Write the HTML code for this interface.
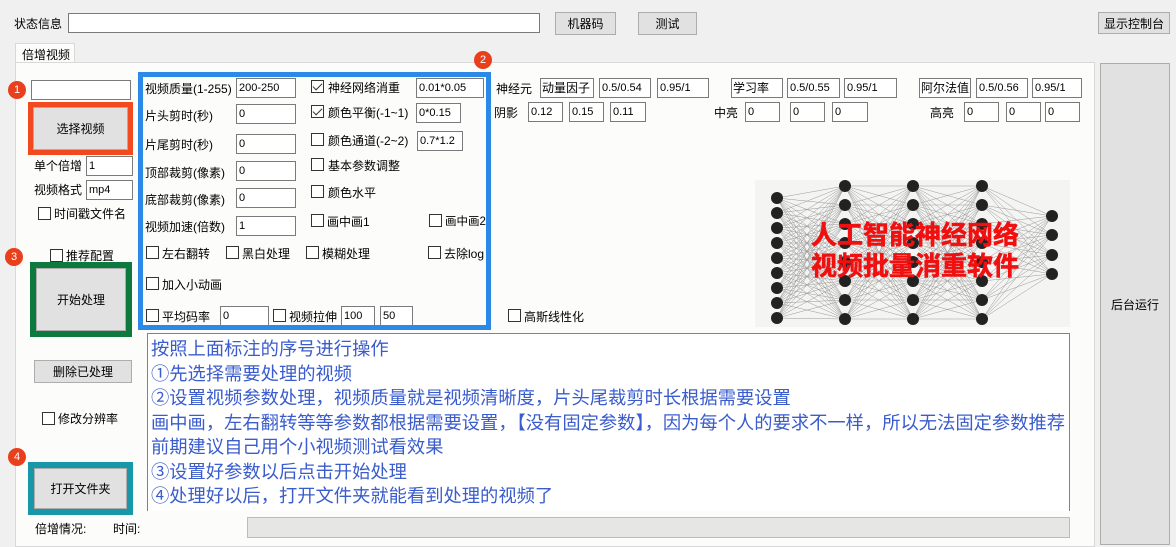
<!DOCTYPE html>
<html><head><meta charset="utf-8"><style>
*{box-sizing:border-box}
body{margin:0;width:1176px;height:547px;overflow:hidden;background:#f0f0f0;font-family:"Liberation Sans","Noto Sans CJK SC",sans-serif;font-size:12px;color:#000;position:relative}
.a{position:absolute;white-space:nowrap}
.in{position:absolute;background:#fff;border:1px solid #7a7a7a;font-family:"Liberation Sans","Noto Sans CJK SC",sans-serif;font-size:11px;padding:2px 2px;line-height:14px;height:20px;white-space:nowrap;overflow:hidden}
.btn{position:absolute;background:#e1e1e1;border:1px solid #adadad;display:flex;align-items:center;justify-content:center;font-size:12px}
.cb{position:absolute;width:13px;height:13px;border:1px solid #333;background:#fff}
.cb.on::after{content:"";position:absolute;left:3px;top:0px;width:4px;height:8px;border:solid #333;border-width:0 1.5px 1.5px 0;transform:rotate(45deg)}
.num{position:absolute;width:18px;height:18px;border-radius:50%;background:#e8401c;color:#fff;font-size:11px;display:flex;align-items:center;justify-content:center}
.lb{font-size:12px;padding:2px 1px}
</style></head><body>
<div class="a" style="left:14px;top:15px">状态信息</div>
<div class="in" style="left:68px;top:13px;width:472px"></div>
<div class="btn" style="left:555px;top:12px;width:61px;height:23px">机器码</div>
<div class="btn" style="left:638px;top:12px;width:59px;height:23px">测试</div>
<div class="btn" style="left:1098px;top:12px;width:72px;height:22px">显示控制台</div>
<div class="a" style="left:15px;top:43px;width:60px;height:20px;background:#fcfcfa;border:1px solid #d9d9d9;border-bottom:none;padding:2px 6px">倍增视频</div>
<div class="a" style="left:15px;top:62px;width:1080px;height:485px;background:#fcfcfa;border:1px solid #d9d9d9"></div>
<div class="btn" style="left:1100px;top:63px;width:70px;height:482px">后台运行</div>

<div class="in" style="left:31px;top:80px;width:100px"></div>
<div class="a" style="left:28px;top:102px;width:105px;height:53px;background:#f24a1e;padding:5px"><div class="btn" style="position:static;width:100%;height:100%">选择视频</div></div>
<div class="a" style="left:34px;top:157px">单个倍增</div><div class="in" style="left:86px;top:156px;width:47px">1</div>
<div class="a" style="left:34px;top:181px">视频格式</div><div class="in" style="left:86px;top:180px;width:47px">mp4</div>
<div class="cb" style="left:38px;top:207px"></div><div class="a" style="left:54px;top:205px">时间戳文件名</div>
<div class="cb" style="left:50px;top:249px"></div><div class="a" style="left:66px;top:247px">推荐配置</div>
<div class="a" style="left:30px;top:262px;width:102px;height:75px;background:#0c7a3e;padding:6px"><div class="btn" style="position:static;width:100%;height:100%">开始处理</div></div>
<div class="btn" style="left:34px;top:360px;width:98px;height:23px">删除已处理</div>
<div class="cb" style="left:42px;top:412px"></div><div class="a" style="left:58px;top:410px">修改分辨率</div>
<div class="a" style="left:28px;top:462px;width:105px;height:53px;background:#1797a8;padding:6px"><div class="btn" style="position:static;width:100%;height:100%">打开文件夹</div></div>
<div class="a" style="left:35px;top:520px">倍增情况:</div><div class="a" style="left:113px;top:520px">时间:</div>
<div class="a" style="left:247px;top:517px;width:823px;height:21px;background:#e6e6e6;border:1px solid #bcbcbc"></div>

<div class="num" style="left:8px;top:81px">1</div>
<div class="num" style="left:474px;top:51px">2</div>
<div class="num" style="left:5px;top:248px">3</div>
<div class="num" style="left:8px;top:448px">4</div>

<div class="a" style="left:138px;top:72px;width:353px;height:258px;border:5px solid #2b8ae8"></div>
<div class="a" style="left:145px;top:80px">视频质量(1-255)</div><div class="in" style="left:236px;top:78px;width:60px">200-250</div>
<div class="a" style="left:145px;top:107px">片头剪时(秒)</div><div class="in" style="left:236px;top:104px;width:60px">0</div>
<div class="a" style="left:145px;top:136px">片尾剪时(秒)</div><div class="in" style="left:236px;top:134px;width:60px">0</div>
<div class="a" style="left:145px;top:164px">顶部裁剪(像素)</div><div class="in" style="left:236px;top:161px;width:60px">0</div>
<div class="a" style="left:145px;top:191px">底部裁剪(像素)</div><div class="in" style="left:236px;top:188px;width:60px">0</div>
<div class="a" style="left:145px;top:218px">视频加速(倍数)</div><div class="in" style="left:236px;top:216px;width:60px">1</div>
<div class="cb on" style="left:311px;top:80px"></div><div class="a" style="left:328px;top:79px">神经网络消重</div><div class="in" style="left:416px;top:78px;width:68px">0.01*0.05</div>
<div class="cb on" style="left:311px;top:105px"></div><div class="a" style="left:328px;top:104px">颜色平衡(-1~1)</div><div class="in" style="left:416px;top:103px;width:45px">0*0.15</div>
<div class="cb" style="left:311px;top:133px"></div><div class="a" style="left:328px;top:132px">颜色通道(-2~2)</div><div class="in" style="left:417px;top:131px;width:46px">0.7*1.2</div>
<div class="cb" style="left:311px;top:158px"></div><div class="a" style="left:328px;top:157px">基本参数调整</div>
<div class="cb" style="left:311px;top:185px"></div><div class="a" style="left:328px;top:184px">颜色水平</div>
<div class="cb" style="left:311px;top:214px"></div><div class="a" style="left:327px;top:213px">画中画1</div>
<div class="cb" style="left:429px;top:214px"></div><div class="a" style="left:445px;top:213px;font-size:11.5px">画中画2</div>
<div class="cb" style="left:146px;top:246px"></div><div class="a" style="left:162px;top:245px">左右翻转</div>
<div class="cb" style="left:226px;top:246px"></div><div class="a" style="left:242px;top:245px">黑白处理</div>
<div class="cb" style="left:306px;top:246px"></div><div class="a" style="left:322px;top:245px">模糊处理</div>
<div class="cb" style="left:428px;top:246px"></div><div class="a" style="left:444px;top:245px">去除log</div>
<div class="cb" style="left:146px;top:277px"></div><div class="a" style="left:162px;top:276px">加入小动画</div>
<div class="cb" style="left:146px;top:309px"></div><div class="a" style="left:162px;top:308px">平均码率</div><div class="in" style="left:220px;top:306px;width:49px">0</div>
<div class="cb" style="left:273px;top:309px"></div><div class="a" style="left:289px;top:308px">视频拉伸</div><div class="in" style="left:341px;top:306px;width:34px">100</div><div class="in" style="left:380px;top:306px;width:33px">50</div>

<div class="a" style="left:496px;top:80px">神经元</div>
<div class="in lb" style="left:540px;top:78px;width:54px">动量因子</div>
<div class="in" style="left:599px;top:78px;width:52px">0.5/0.54</div><div class="in" style="left:657px;top:78px;width:52px">0.95/1</div>
<div class="in lb" style="left:731px;top:78px;width:52px">学习率</div>
<div class="in" style="left:787px;top:78px;width:53px">0.5/0.55</div><div class="in" style="left:844px;top:78px;width:53px">0.95/1</div>
<div class="in lb" style="left:919px;top:78px;width:52px">阿尔法值</div>
<div class="in" style="left:976px;top:78px;width:52px">0.5/0.56</div><div class="in" style="left:1032px;top:78px;width:50px">0.95/1</div>
<div class="a" style="left:494px;top:104px">阴影</div>
<div class="in" style="left:528px;top:102px;width:35px">0.12</div><div class="in" style="left:569px;top:102px;width:35px">0.15</div><div class="in" style="left:610px;top:102px;width:36px">0.11</div>
<div class="a" style="left:714px;top:104px">中亮</div>
<div class="in" style="left:745px;top:102px;width:35px">0</div><div class="in" style="left:790px;top:102px;width:35px">0</div><div class="in" style="left:832px;top:102px;width:36px">0</div>
<div class="a" style="left:930px;top:104px">高亮</div>
<div class="in" style="left:964px;top:102px;width:35px">0</div><div class="in" style="left:1006px;top:102px;width:35px">0</div><div class="in" style="left:1045px;top:102px;width:35px">0</div>
<div class="cb" style="left:508px;top:309px"></div><div class="a" style="left:524px;top:308px">高斯线性化</div>

<svg id="nn" class="a" style="left:755px;top:180px;background:#f4f4f2" width="315" height="147"></svg>
<div class="a" style="left:800px;top:220px;color:#f01010;font-weight:bold;font-size:26px;line-height:31px;text-align:center;width:230px;-webkit-text-stroke:0.6px #f01010">人工智能神经网络<br>视频批量消重软件</div>

<div class="a" style="left:147px;top:333px;width:923px;height:178px;background:#fff;border:1px solid #828282;border-bottom:none;color:#3a5ccc;font-size:18.3px;line-height:24.5px;padding:3px 0 0 3px;overflow:visible">按照上面标注的序号进行操作<br>①先选择需要处理的视频<br>②设置视频参数处理，视频质量就是视频清晰度，片头尾裁剪时长根据需要设置<br>画中画，左右翻转等等参数都根据需要设置，【没有固定参数】，因为每个人的要求不一样，所以无法固定参数推荐<br>前期建议自己用个小视频测试看效果<br>③设置好参数以后点击开始处理<br>④处理好以后，打开文件夹就能看到处理的视频了</div>
<script>
var s=document.getElementById('nn'),h='';
var cols=[[22,[18,33,48,63,78,93,108,123,138]],[90,[6,25,44,63,82,101,120,139]],[158,[6,25,44,63,82,101,120,139]],[227,[6,25,44,63,82,101,120,139]],[297,[36,55,75,94]]];
for(var c=0;c<4;c++){var A=cols[c],B=cols[c+1];A[1].forEach(function(y1){B[1].forEach(function(y2){h+='<line x1="'+A[0]+'" y1="'+y1+'" x2="'+B[0]+'" y2="'+y2+'" stroke="#999" stroke-width="0.5"/>';});});}
cols.forEach(function(C){C[1].forEach(function(y){h+='<circle cx="'+C[0]+'" cy="'+y+'" r="6" fill="#222"/>';});});
s.innerHTML=h;
</script>
</body></html>
